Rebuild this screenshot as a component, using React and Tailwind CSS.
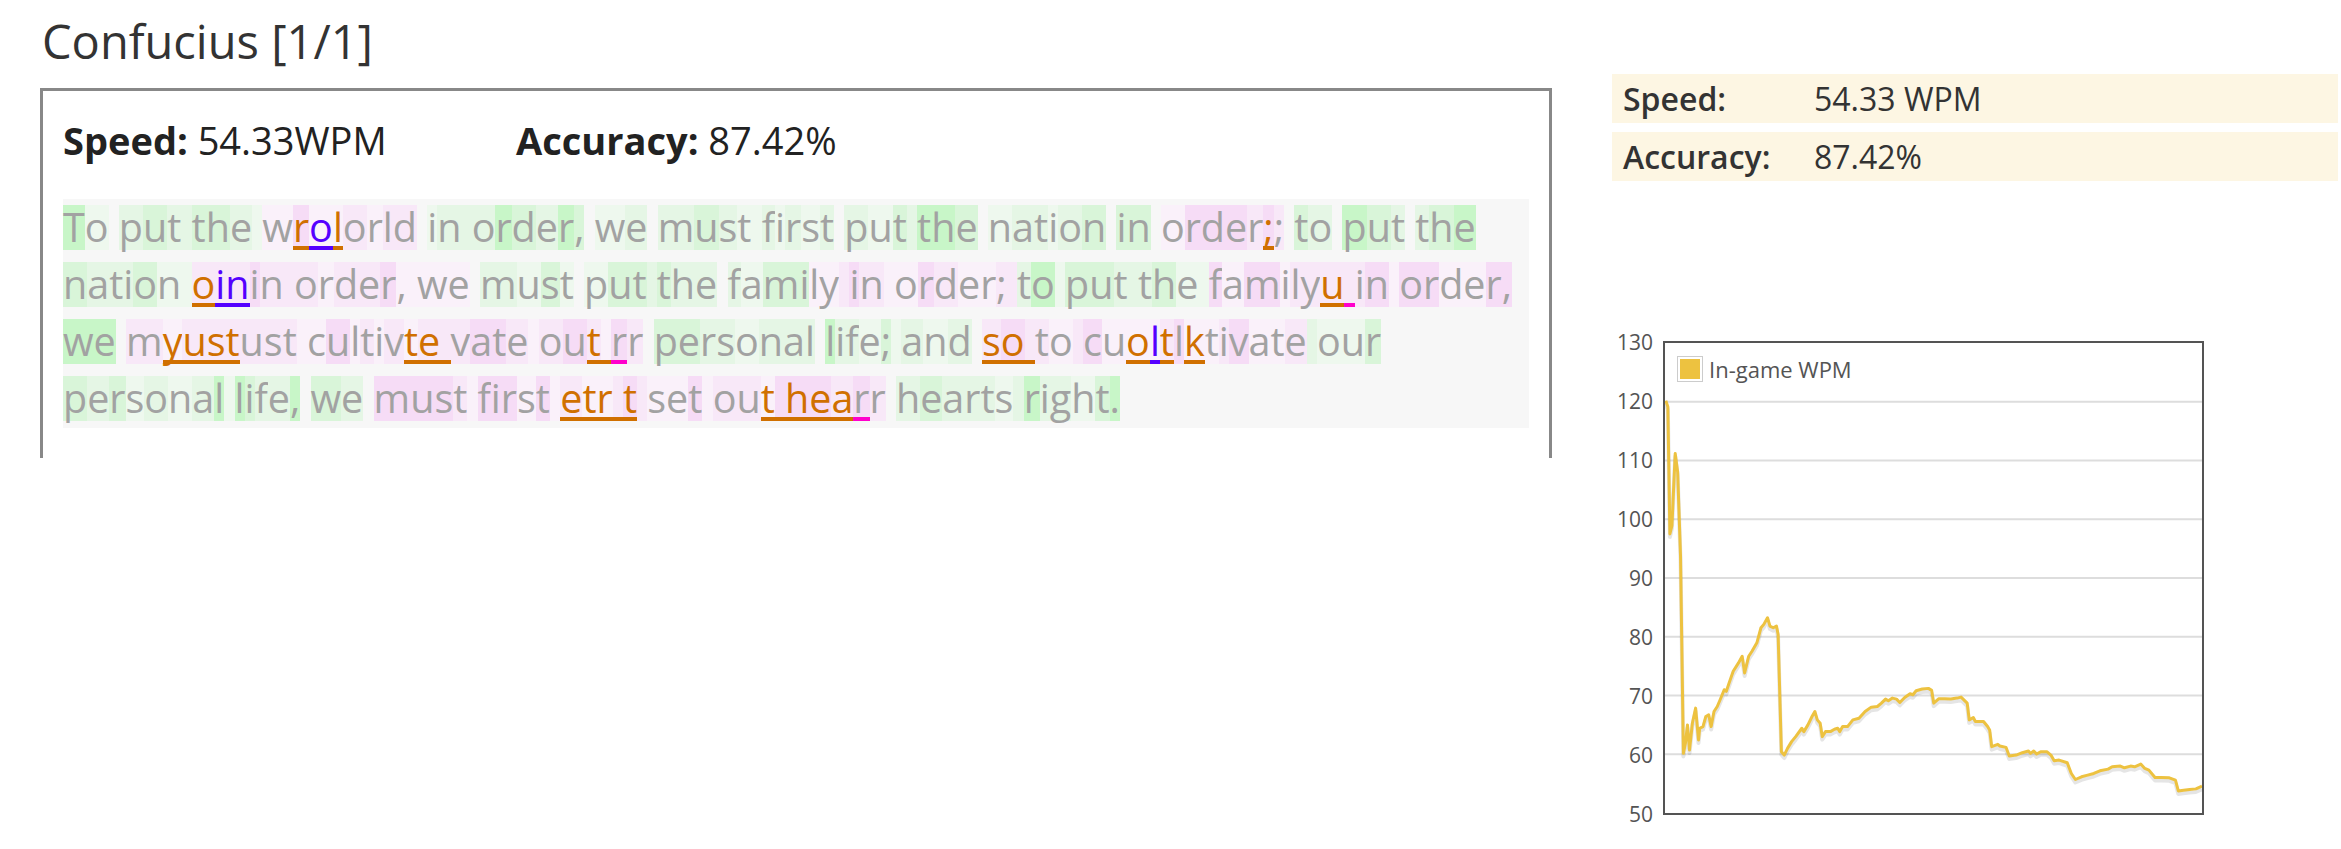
import React from 'react';

const LINES = [
  {
    segs: [['To put the w', 'n'], ['r', 'o'], ['o', 'b'], ['l', 'o'], ['orld in order, we must first put the nation in order', 'n'], [';', 'o'], ['; to put the', 'n']],
    pink: ['wrolorld', 'order;;'],
  },
  {
    segs: [['nation ', 'n'], ['o', 'o'], ['in', 'b'], ['in order, we must put the family in order; to put the family', 'n'], ['u', 'o'], [' ', 'm'], ['in order,', 'n']],
    pink: ['oinin order, we', 'ly in order; ', 'familyu in order,'],
  },
  {
    segs: [['we m', 'n'], ['yust', 'o'], ['ust cultiv', 'n'], ['te ', 'o'], ['vate ou', 'n'], ['t ', 'o'], ['r', 'm'], ['r personal life; and ', 'n'], ['so ', 'o'], ['to cu', 'n'], ['o', 'o'], ['l', 'b'], ['t', 'o'], ['l', 'n'], ['k', 'o'], ['tivate our', 'n']],
    pink: ['myustust cultivte vate out rr', 'so to cuoltlktivate'],
  },
  {
    segs: [['personal life, we must first ', 'n'], ['etr t', 'o'], [' set ou', 'n'], ['t hea', 'o'], ['r', 'm'], ['r hearts right.', 'n']],
    pink: ['must first ', 'etr t set out hearr'],
  },
];

const KIND = {
  n: 'text-[#a2a2a2]',
  o: 'text-[#d07000] border-b-4 border-[#d07000]',
  b: 'text-[#5500ff] border-b-4 border-[#5500ff]',
  m: 'text-[#a2a2a2] border-b-4 border-[#ff00cc]',
};

const PINK = ['#f6dcf6', '#f8e8f8', '#faf1fa'];
const GREEN = ['#c8f6c8', '#d9f5d9', '#e5f6e5', '#eef8ee'];

function rand(a, b) {
  const x = Math.sin(a * 12.9898 + b * 78.233) * 43758.5453;
  return x - Math.floor(x);
}

function shade(line, i, ch, pink) {
  const r = rand(i, line);
  if (pink) return PINK[Math.floor(r * 3)];
  if (ch === ' ' && r < 0.5) return 'transparent';
  if (r < 0.15) return GREEN[0];
  if (r < 0.4) return GREEN[1];
  if (r < 0.75) return GREEN[2];
  return GREEN[3];
}

function TextLine({ line, idx }) {
  const text = line.segs.map(s => s[0]).join('');
  const pink = new Array(text.length).fill(false);
  line.pink.forEach(sub => {
    const at = text.indexOf(sub);
    if (at >= 0) for (let k = at; k < at + sub.length; k++) pink[k] = true;
  });
  let pos = 0;
  const chars = [];
  line.segs.forEach(([s, kind]) => {
    for (const ch of s) {
      const i = pos++;
      chars.push(
        <span key={i} className={`h-[45px] leading-[45px] ${KIND[kind]}`} style={{ background: shade(idx, i, ch, pink[i] || kind !== 'n') }}>
          {ch}
        </span>
      );
    }
  });
  return <div className="flex h-[45px] whitespace-pre">{chars}</div>;
}

// wpm trace, in the plot's own units (x 205..1520, y 65..1468)
const PTS = [
  207,237, 212,255, 217,635, 222,610, 230,395, 236,450, 243,700, 250,1290, 255,1260, 260,1205, 265,1280, 272,1200,
  280,1155, 287,1250, 290,1215, 298,1210, 305,1180, 312,1175, 318,1210, 325,1165, 333,1150, 340,1130, 350,1100,
  355,1105, 362,1080, 372,1045, 385,1020, 394,1000, 400,1050, 410,1000, 418,985, 430,960, 440,915, 447,905, 456,885,
  462,910, 470,915, 478,910, 482,935, 490,1285, 497,1295, 505,1275, 515,1255, 525,1240, 540,1215, 545,1225, 555,1205,
  565,1180, 572,1165, 578,1190, 585,1200, 590,1240, 598,1225, 610,1225, 620,1218, 628,1215, 633,1225, 640,1210,
  652,1210, 665,1190, 680,1185, 695,1165, 710,1152, 725,1150, 735,1140, 745,1128, 752,1133, 762,1125, 772,1128,
  780,1138, 792,1123, 805,1112, 812,1115, 820,1103, 835,1098, 850,1096, 858,1102, 863,1140, 875,1127, 890,1127,
  905,1128, 920,1125, 930,1122, 945,1140, 950,1190, 960,1183, 965,1195, 985,1195, 995,1210, 1000,1220, 1005,1270,
  1020,1263, 1025,1268, 1040,1272, 1048,1298, 1065,1295, 1080,1288, 1095,1283, 1100,1290, 1108,1283, 1115,1292,
  1125,1285, 1140,1285, 1150,1295, 1158,1312, 1170,1310, 1190,1318, 1200,1350, 1210,1368, 1225,1360, 1240,1355,
  1255,1350, 1270,1342, 1290,1337, 1300,1330, 1320,1328, 1330,1333, 1345,1328, 1355,1330, 1370,1322, 1380,1335,
  1390,1340, 1405,1362, 1420,1362, 1440,1363, 1455,1370, 1462,1402, 1475,1400, 1490,1398, 1505,1396, 1520,1388,
];

function pathD() {
  let d = '';
  for (let i = 0; i < PTS.length; i += 2) d += `${i ? 'L' : 'M'}${PTS[i]} ${PTS[i + 1]} `;
  return d;
}

const TICKS = [130, 120, 110, 100, 90, 80, 70, 60, 50];

function WpmChart() {
  const d = pathD();
  return (
    <div className="flex items-start mt-[132px]">
      <div className="w-[51px] flex flex-col">
        {TICKS.map(t => (
          <div key={t} className="h-[59px] flex items-center justify-end pr-[10px] text-[21px] text-[#545454]">{t}</div>
        ))}
      </div>
      <div className="relative mt-[28px] w-[541px] h-[474px] border-2 border-[#545454] bg-white">
        <svg className="w-full h-full block" viewBox="205 65 1315 1403" preserveAspectRatio="none">
          {[120, 110, 100, 90, 80, 70, 60].map(v => {
            const y = 65 + ((130 - v) / 80) * 1403;
            return <line key={v} x1="205" x2="1520" y1={y} y2={y} stroke="#dddddd" strokeWidth="2" vectorEffect="non-scaling-stroke" />;
          })}
          <path d={d} transform="translate(0 9)" fill="none" stroke="rgba(0,0,0,0.1)" strokeWidth="4" strokeLinejoin="round" vectorEffect="non-scaling-stroke" />
          <path d={d} fill="none" stroke="#edc240" strokeWidth="3" strokeLinejoin="round" vectorEffect="non-scaling-stroke" />
        </svg>
        <div className="absolute left-[12px] top-[13px] flex items-center gap-[6px]">
          <div className="border border-[#cccccc] p-[2px]">
            <div className="w-[20px] h-[20px] bg-[#edc240]" />
          </div>
          <span className="text-[22px] text-[#545454] leading-none">In-game WPM</span>
        </div>
      </div>
    </div>
  );
}

export default function App() {
  return (
    <div className="w-[2341px] h-[849px] bg-white flex font-['Open_Sans',sans-serif] overflow-hidden">
      <div className="ml-[40px] w-[1512px]">
        <h1 className="pt-[17px] pl-[2px] text-[47px] leading-[48px] text-[#333333]">Confucius [1/1]</h1>
        <div className="mt-[23px] h-[370px] border-[3px] border-b-0 border-[#888888] px-[20px]">
          <div className="pt-[29px] flex text-[38px] leading-[40px] text-[#222222]">
            <div className="w-[453px]"><span className="font-bold">Speed:</span> 54.33WPM</div>
            <div><span className="font-bold">Accuracy:</span> 87.42%</div>
          </div>
          <div className="mt-[39px] bg-[#f7f7f7] pt-[6px] pb-[7px] flex flex-col gap-[12px] text-[39.5px]">
            {LINES.map((l, i) => <TextLine key={i} line={l} idx={i} />)}
          </div>
        </div>
      </div>
      <div className="ml-[60px] w-[726px] pt-[74px]">
        <div className="flex flex-col gap-[9px] text-[32px] text-[#333333]">
          <div className="h-[49px] bg-[#fdf6e3] flex items-center pl-[11px]">
            <span className="w-[191px] font-semibold">Speed:</span>
            <span>54.33 WPM</span>
          </div>
          <div className="h-[49px] bg-[#fdf6e3] flex items-center pl-[11px]">
            <span className="w-[191px] font-semibold">Accuracy:</span>
            <span>87.42%</span>
          </div>
        </div>
        <WpmChart />
      </div>
    </div>
  );
}
